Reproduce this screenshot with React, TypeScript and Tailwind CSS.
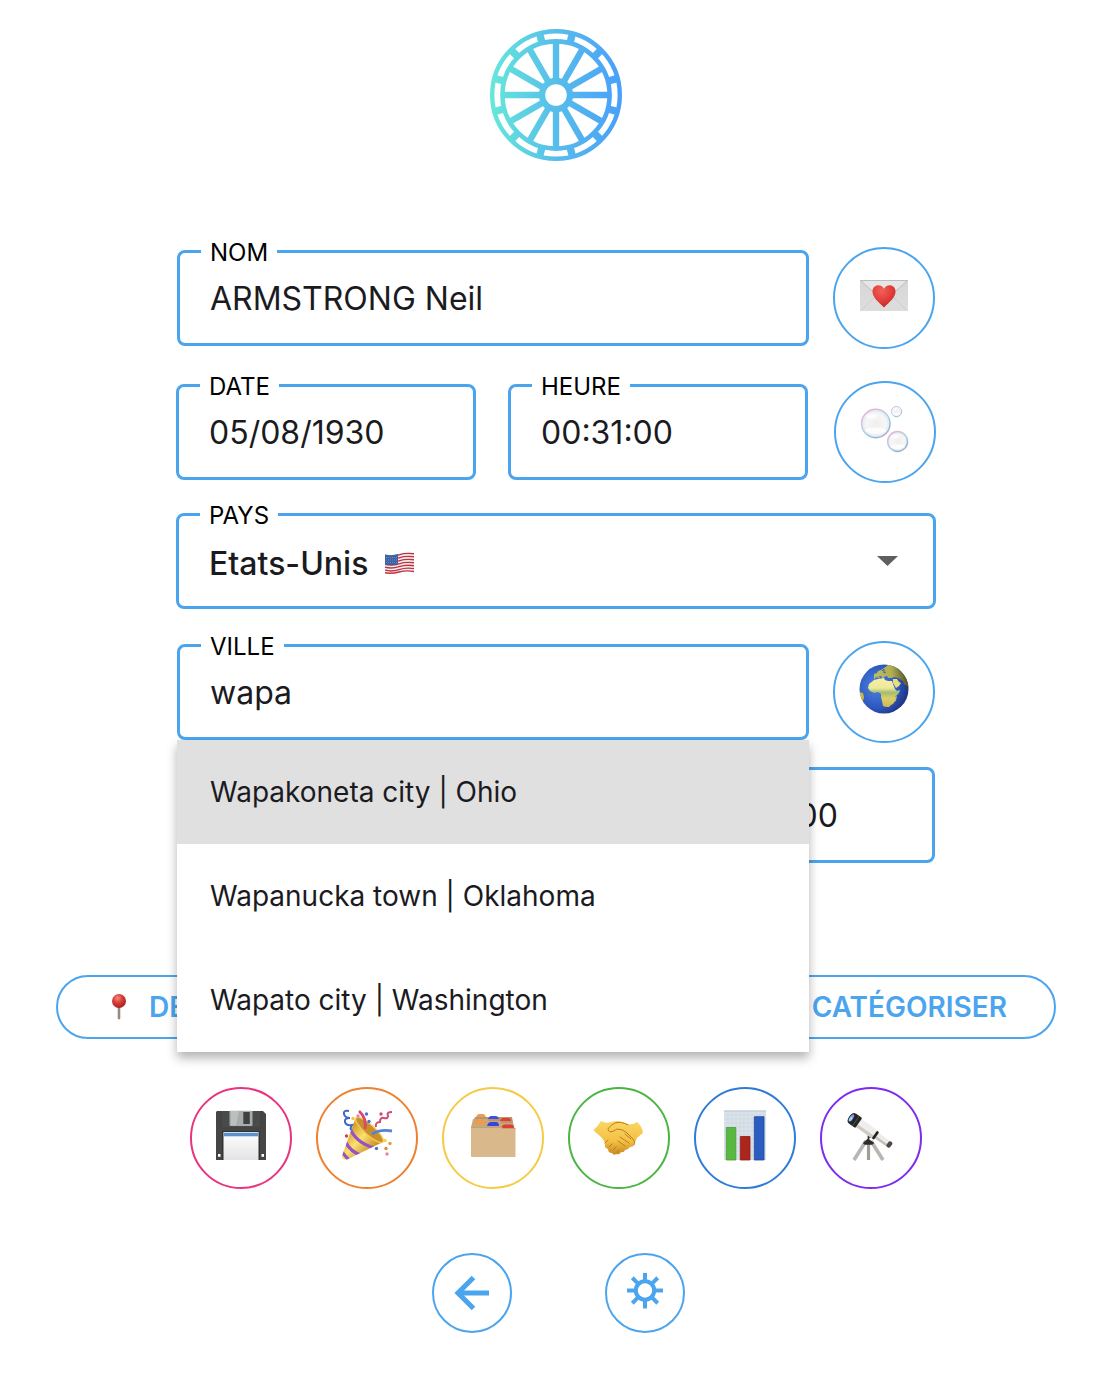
import type { ComponentProps, ReactNode } from "react";
import clsx from "clsx";

const steps = Array.from({ length: 12 }, (_, i) => i * 30);

function Wheel() {
  return (
    <svg className="size-[132px]" viewBox="-66 -66 132 132" role="img" aria-label="Logo">
      <defs>
        <linearGradient id="wheel-fill" x1="0" y1="0" x2="1" y2="0">
          <stop offset="0" stopColor="#66e8da" />
          <stop offset="0.5" stopColor="#57bdea" />
          <stop offset="1" stopColor="#499ffb" />
        </linearGradient>
        <mask id="wheel-mask" maskUnits="userSpaceOnUse" x="-66" y="-66" width="132" height="132">
          <g fill="none" stroke="#fff">
            <circle r="63.8" strokeWidth="4.4" />
            <circle r="53.6" strokeWidth="4.6" />
            <circle r="14" strokeWidth="6.400" />
            {steps.map((a) => (
              <g key={a} transform={`rotate(${a})`}>
                <path d="M0-15V-53" strokeWidth="6.400" />
                <path d="M0-54V-63" strokeWidth="7.400" transform="rotate(15)" />
              </g>
            ))}
          </g>
        </mask>
      </defs>
      <rect x="-66" y="-66" width="132" height="132" fill="url(#wheel-fill)" mask="url(#wheel-mask)" />
    </svg>
  );
}

function Glyph({ children }: { children: ReactNode }) {
  return (
    <svg className="size-[50px] overflow-visible" viewBox="0 0 50 50" aria-hidden="true">
      {children}
    </svg>
  );
}

function LoveLetter() {
  return (
    <Glyph>
      <defs>
        <linearGradient id="paper" x1="0" y1="0" x2="0" y2="1">
          <stop offset="0" stopColor="#d6d6d6" />
          <stop offset="1" stopColor="#dedede" />
        </linearGradient>
        <radialGradient id="heart" cx="0.4" cy="0.25" r="0.8">
          <stop offset="0" stopColor="#f4605a" />
          <stop offset="0.6" stopColor="#df3b37" />
          <stop offset="1" stopColor="#b92823" />
        </radialGradient>
      </defs>
      <rect x="1" y="10" width="48" height="31" rx="0.5" fill="url(#paper)" />
      <path d="M2 40.500 19 24h12l17 16.500" fill="#dcdcdc" stroke="#cacaca" strokeWidth="0.8" />
      <path d="M1.500 10.500 21 28q4 3.500 8 0l19.500-17.500z" fill="#e6e6e6" stroke="#b3b6b8" strokeWidth="0.8" />
      <path
        d="M25 37.500C20 32.500 13.500 27.500 13.500 21.500c0-7 8.500-8.500 11.500-2.800 3-5.700 11.500-4.200 11.500 2.800C36.500 27.500 30 32.500 25 37.500z"
        fill="url(#heart)"
      />
    </Glyph>
  );
}

function Bubbles() {
  const bubbles = [
    { x: 15.8, y: 19.5, r: 14.3 },
    { x: 36.5, y: 7.5, r: 5.2 },
    { x: 37.6, y: 37.5, r: 10 },
  ];
  return (
    <Glyph>
      <defs>
        <linearGradient id="film" x1="0.1" y1="0" x2="0.8" y2="1">
          <stop offset="0" stopColor="#f2a9d2" />
          <stop offset="0.3" stopColor="#d3c3dd" />
          <stop offset="0.6" stopColor="#a9cfe4" />
          <stop offset="0.85" stopColor="#8fb4cf" />
          <stop offset="1" stopColor="#d3a9c6" />
        </linearGradient>
        <radialGradient id="bubble">
          <stop offset="0" stopColor="#f1efed" />
          <stop offset="0.7" stopColor="#f7f6f5" />
          <stop offset="1" stopColor="#d6e8f4" />
        </radialGradient>
      </defs>
      {bubbles.map((b) => (
        <g key={b.r}>
          <circle cx={b.x} cy={b.y} r={b.r} fill="url(#bubble)" stroke="url(#film)" strokeWidth={b.r > 6 ? 1.4 : 0.9} />
          <ellipse cx={b.x} cy={b.y + b.r * 0.5} rx={b.r * 0.75} ry={b.r * 0.22} fill="#fff" opacity="0.7" />
          <ellipse cx={b.x - b.r * 0.3} cy={b.y - b.r * 0.5} rx={b.r * 0.4} ry={b.r * 0.2} fill="#fff" opacity="0.7" />
        </g>
      ))}
    </Glyph>
  );
}

function Globe() {
  return (
    <Glyph>
      <defs>
        <radialGradient id="sea" cx="0.35" cy="0.45" r="0.65">
          <stop offset="0" stopColor="#4b83e0" />
          <stop offset="0.65" stopColor="#2e58bf" />
          <stop offset="1" stopColor="#1d327c" />
        </radialGradient>
        <linearGradient id="eurasia" x1="0" y1="0.5" x2="1" y2="0.4">
          <stop offset="0" stopColor="#b9bf62" />
          <stop offset="0.5" stopColor="#b3ae52" />
          <stop offset="1" stopColor="#3d3f1c" />
        </linearGradient>
        <linearGradient id="africa" x1="0" y1="0" x2="0" y2="1">
          <stop offset="0" stopColor="#f5efa6" />
          <stop offset="0.35" stopColor="#eee89a" />
          <stop offset="0.5" stopColor="#a3bd72" />
          <stop offset="0.7" stopColor="#dccf69" />
          <stop offset="1" stopColor="#cdb850" />
        </linearGradient>
        <clipPath id="globe-clip">
          <circle cx="25" cy="25" r="24.500" />
        </clipPath>
      </defs>
      <g clipPath="url(#globe-clip)">
        <rect width="50" height="50" fill="url(#sea)" />
        <path
          d="M15 13l0-3 3-1 1-2 3-1 3-2 4-3 8 0 8 6 6 10 0 8-3-3-3-2-1-3-5-3-4-1-2 1-4 0-1-2-3 1-1 2-2-3-2 0 1 3-3-2-2 1-1 2z"
          fill="url(#eurasia)"
        />
        <path
          d="M15 16l4-1 6-1 1 2 3 1 4 0 1 3 2 5 2 2 3-1-1 3-4 4 0 4-2 3-2 1-2 2-3 0-3-1-1-5-1-4 0-3-3-2-4 1-4-2-2-3 1-4z"
          fill="url(#africa)"
        />
        <path d="M34 15l4 0 2 3 2 1-2 3-3 2-3-5z" fill="#e7dc80" />
        <path d="M36 33l2-1-1 4-1 2-1-1z" fill="#d3c35c" />
        <path d="M0 28l4 1 1 4-1 4-3 3-4-6z" fill="#cdb83f" />
        <path d="M23 7l2-2 0 4 2-1" fill="none" stroke="#3663bd" />
      </g>
    </Glyph>
  );
}

function Floppy() {
  return (
    <Glyph>
      <defs>
        <linearGradient id="floppy-label" x1="0" y1="0" x2="0" y2="1">
          <stop offset="0" stopColor="#fff" />
          <stop offset="1" stopColor="#e3e3e6" />
        </linearGradient>
      </defs>
      <path d="M1 1H47l3 3v46H0V2z" fill="#454545" />
      <path d="M5 1v15q0 2 2 2h36q2 0 2-2V1" fill="#4a4a4a" stroke="#404040" strokeWidth="0.8" />
      <rect x="13.500" y="0.700" width="23" height="15.300" rx="0.800" fill="#a9acad" />
      <path d="M15 1h8l-3 14.500h-5z" fill="#bcbfbf" />
      <rect x="27.300" y="2" width="6.500" height="12" rx="0.500" fill="#3f4041" />
      <path d="M6 50V22.500q0-1.500 1.500-1.500h35q1.500 0 1.500 1.500V50z" fill="#323232" />
      <rect x="7.500" y="22" width="35" height="28" fill="url(#floppy-label)" />
      <rect x="8" y="22.700" width="34" height="3.600" fill="#5d90c8" />
      <rect x="2" y="44" width="2.500" height="2.800" fill="#fff" />
      <rect x="45.500" y="44" width="2.500" height="2.800" fill="#fff" />
    </Glyph>
  );
}

function PartyPopper() {
  return (
    <Glyph>
      <defs>
        <linearGradient id="cone" gradientUnits="userSpaceOnUse" x1="5" y1="24" x2="26" y2="44">
          <stop offset="0" stopColor="#d9a532" />
          <stop offset="0.45" stopColor="#fbe070" />
          <stop offset="1" stopColor="#c98f28" />
        </linearGradient>
        <clipPath id="cone-clip">
          <path d="M13.500 8 0 46q0 4 5 3.500L41 32q-3-16-27.500-24z" />
        </clipPath>
      </defs>
      <g clipPath="url(#cone-clip)">
        <rect width="50" height="50" fill="url(#cone)" />
        <path d="M8 18q5 14 24 20M3 31q5 11 18 15M0 42q3 4 7 8" fill="none" stroke="#9850c8" strokeWidth="3.200" />
      </g>
      <ellipse cx="27.500" cy="20" rx="18" ry="5" transform="rotate(42 27.500 20)" fill="#c98f2b" stroke="#f3cb4f" strokeWidth="1.400" />
      <path d="M23 19Q25 8 17 1" fill="none" stroke="#d9486f" strokeWidth="2.800" />
      <path d="M30 24Q38 19 50 21" fill="none" stroke="#5381dc" strokeWidth="2.800" />
      <path d="M7 1Q1 0 2 4t6 4q-6 0-5 4t7 3q-2 3-1 5" fill="none" stroke="#3f66cb" strokeWidth="2" />
      <path d="M34 17q-1-5 4-5 0-5 4-4 4 1 4-2-2-4 4-4" fill="none" stroke="#cf4d72" strokeWidth="2" />
      {[
        [24.5, 4, "#4473d4"], [27, 11.5, "#4473d4"], [11, 8.5, "#edc64b"], [16, 6, "#e583b3"],
        [39, 4, "#d74b69"], [4.5, 26, "#d93b51"], [43, 30.5, "#efd447"], [48, 33.5, "#e29a46"],
        [34.5, 38.5, "#4473d4"], [44, 38.5, "#d98a3e"], [45, 44, "#e583b3"],
      ].map(([x, y, c]) => (
        <circle key={`${x}-${y}`} cx={x} cy={y} r="1.700" fill={String(c)} />
      ))}
    </Glyph>
  );
}

function CardIndex() {
  return (
    <Glyph>
      <path d="M7 7h37l2 11H3z" fill="#b8956b" />
      <path d="M8 7q1-3 3-3h4q2 0 3 3z" fill="#ec9c4c" />
      <path d="M20 9q1-3 3-3h5q2 0 3 3z" fill="#3b4de3" />
      <path d="M32 11q1-3 3-3h5q3 0 3 3z" fill="#e23e38" />
      <path d="M5 9h14l2 2h11l2 2h11l1.500 5H3z" fill="#cba678" />
      <path d="M6 14q1-4 4-4h5q2 0 3 4z" fill="#ec9c4c" />
      <path d="M19 16q1-4 4-4h5q3 0 3 4z" fill="#3445e2" />
      <path d="M33 18.500q1-4 4-4h6q3 0 3 4z" fill="#df3c36" />
      <path d="M3 17h30l2 1h12.500v28q0 1-1 1H4q-1 0-1-1z" fill="#d9b88c" />
      <path d="M3 17.500h30l2 1h12.500" fill="none" stroke="#bd9a6e" strokeWidth="0.800" />
    </Glyph>
  );
}

function Handshake() {
  return (
    <Glyph>
      <defs>
        <linearGradient id="skin" x1="0" y1="0" x2="0" y2="1">
          <stop offset="0" stopColor="#fbd664" />
          <stop offset="0.6" stopColor="#f3c044" />
          <stop offset="1" stopColor="#c8871e" />
        </linearGradient>
      </defs>
      <path
        d="M-0.500 20Q4 16 7 11q5 3 10 1 9-3 17 2 5 1 9-2 5 4 6 11-3 2-6 5-1 3-3 6 0 3-4 3-2 3-5 3-1 3-4 2-1 3-5 2-2 2-4-1-4 0-4-4-4-1-3-5-1-5-5-8-4-3-6.500-6z"
        fill="url(#skin)"
      />
      <path
        d="M34 15q-7-4-13-2-7 4-7 7 2 4 9-1 6 0 10 4l6 6q3 3 1 6M31 24l6 5M26 27l9 6M24 31l7 5M11 33l3-3M15 37l3-3M19 40l3-3M23 42l2-2"
        fill="none" stroke="#bb7f20" strokeLinecap="round"
      />
    </Glyph>
  );
}

function BarChart() {
  return (
    <Glyph>
      <rect x="4" y="0.500" width="42" height="49.500" fill="#dbe3ea" />
      <path
        d="M8 1v49M12 1v49M16 1v49M20 1v49M24 1v49M28 1v49M32 1v49M36 1v49M40 1v49M44 1v49M4 5h42M4 9h42M4 13h42M4 17h42M4 21h42M4 25h42M4 29h42M4 33h42M4 37h42M4 41h42M4 45h42"
        stroke="#c9d5df" strokeWidth="0.600"
      />
      <path d="M4 1h42" stroke="#bcc5cc" />
      <path d="M6.300 17.500h9.500V50H6.300z" fill="#58b840" stroke="#479a34" strokeWidth="0.800" />
      <path d="M20.300 26.500H30V50h-9.700z" fill="#ab261c" stroke="#8d1c14" strokeWidth="0.800" />
      <path d="M34.300 6.700H44V50h-9.700z" fill="#2a5dc0" stroke="#1f489b" strokeWidth="0.800" />
    </Glyph>
  );
}

function Telescope() {
  return (
    <Glyph>
      <path d="M20 31 8 50M25 31l12 19" stroke="#b9b6b2" strokeWidth="3.600" />
      <path d="M22.500 31v19" stroke="#a19e9a" strokeWidth="3.200" />
      <path d="M18 33l4-3.500 5 3.500-1 1h-7zM22.500 24v7" fill="#2d2d2d" stroke="#2d2d2d" strokeWidth="1.600" />
      <path d="M22 26q7 1 7-5" fill="none" stroke="#333" strokeWidth="3" />
      <g transform="translate(3.500 1.500) rotate(35 2 7) scale(0.88 0.82)">
        <rect x="11" y="2" width="24" height="12" fill="#f0eeec" />
        <rect x="11" y="10" width="24" height="4" fill="#cecac6" />
        <rect x="35" y="4" width="18" height="8" rx="1" fill="#eeebe8" />
        <rect x="35" y="9" width="18" height="3" fill="#c4c0bc" />
        <rect x="34" y="3" width="3" height="11" rx="1" fill="#222" />
        <rect x="52" y="4" width="5" height="8" rx="2" fill="#4a4a4a" />
        <rect x="2" y="0.500" width="10" height="15" rx="1.500" fill="#262626" />
        <path d="M8 1v14" stroke="#555" />
        <ellipse cx="2" cy="8" rx="3.200" ry="7" fill="#20232e" />
        <ellipse cx="1.800" cy="8" rx="2" ry="5" fill="#8a93e8" />
        <ellipse cx="1.800" cy="9.500" rx="1.500" ry="3" fill="#8be0df" />
      </g>
    </Glyph>
  );
}

function Pin() {
  return (
    <svg className="h-7 w-5 shrink-0" viewBox="0 0 20 28" aria-hidden="true">
      <defs>
        <radialGradient id="pin-head" cx="0.4" cy="0.3" r="0.7">
          <stop offset="0" stopColor="#f28a80" />
          <stop offset="0.5" stopColor="#d83b36" />
          <stop offset="1" stopColor="#a9231f" />
        </radialGradient>
      </defs>
      <path d="M8.700 13h2.600v12.500q-1.300 2-2.600 0z" fill="#968b84" />
      <circle cx="10" cy="8" r="7" fill="url(#pin-head)" />
    </svg>
  );
}

function Flag() {
  return (
    <svg className="h-[22px] w-[29px]" viewBox="0 0 29 22" aria-hidden="true">
      <path d="M0 2.500Q7 4 14 1.800T29 1V20Q22 18.500 15 20.300T0 21.500z" fill="#f3efef" />
      <path
        d="M0 3.500Q7 5 14 2.800T29 1.800M0 6.500Q7 8 14 5.800T29 4.800M0 9.400Q7 11 14 8.800T29 7.800M0 12.300Q7 14 14 11.800T29 10.800M0 15.200Q7 17 14 14.700T29 13.700M0 18.100Q7 20 14 17.600T29 16.600M0 20.800Q7 22 14 20T29 19.500"
        fill="none" stroke="#bf3340" strokeWidth="1.400"
      />
      <path d="M0 2.500Q7 4 13 2v10.500Q7 14 0 12.800z" fill="#3f62a5" />
      <path d="M1 5.500h11M1 8h11M1 10.500h11" stroke="#7f98c9" strokeWidth="0.700" strokeDasharray="1 1" />
    </svg>
  );
}

interface FieldProps {
  id: string;
  label: string;
  className?: string;
  children: ReactNode;
}

function Field({ id, label, className, children }: FieldProps) {
  return (
    <fieldset className={clsx("h-24 min-w-0 rounded-lg border-[3px] border-[#4ba5ee]", className)}>
      <legend className="ml-[21px] h-[3px] px-[9px] text-2xl leading-[5px] text-black">
        <label htmlFor={id}>{label}</label>
      </legend>
      {children}
    </fieldset>
  );
}

function TextField({ id, label, value, className }: { id: string; label: string; value: string; className?: string }) {
  return (
    <Field id={id} label={label} className={className}>
      <input
        id={id}
        defaultValue={value}
        className="h-[90px] w-full bg-transparent px-[30px] text-[32px] text-[#1b1b1f] outline-none"
      />
    </Field>
  );
}

function RoundButton({ className, ...props }: ComponentProps<"button">) {
  return (
    <button
      type="button"
      className={clsx(
        "flex size-[102px] shrink-0 items-center justify-center rounded-full border-2 pb-1.5",
        className ?? "border-[#4ba5ee]",
      )}
      {...props}
    />
  );
}

const cities = ["Wapakoneta city | Ohio", "Wapanucka town | Oklahoma", "Wapato city | Washington"];

const actions = [
  { name: "Enregistrer", ring: "border-[#ea337f]", icon: <Floppy /> },
  { name: "Fêter", ring: "border-[#ee8130]", icon: <PartyPopper /> },
  { name: "Fiches", ring: "border-[#f5cb46]", icon: <CardIndex /> },
  { name: "Relations", ring: "border-[#4bb543]", icon: <Handshake /> },
  { name: "Statistiques", ring: "border-[#2f7cd8]", icon: <BarChart /> },
  { name: "Observer", ring: "border-[#7d2bf0]", icon: <Telescope /> },
];

const pill =
  "flex h-16 items-center gap-5 rounded-full border-2 border-[#4ba5ee] pr-[47px] pl-[51px] text-[28px] font-semibold text-[#4ba5ee]";
const navButton =
  "flex size-20 items-center justify-center rounded-full border-2 border-[#4ba5ee] text-[#4ba5ee]";

export default function App() {
  return (
    <main className="flex flex-col items-center bg-white pt-[29px] pb-14 pl-[18px] font-['Inter',sans-serif] text-[#1b1b1f]">
      <Wheel />

      <form className="mt-[86px] w-full max-w-[760px]">
        <div className="flex items-center gap-6 px-px">
          <TextField id="nom" label="NOM" value="ARMSTRONG Neil" className="flex-1" />
          <RoundButton aria-label="Envoyer">
            <LoveLetter />
          </RoundButton>
        </div>

        <div className="mt-8 flex items-center gap-[26px]">
          <div className="grid flex-1 grid-cols-2 gap-8">
            <TextField id="date" label="DATE" value="05/08/1930" />
            <TextField id="heure" label="HEURE" value="00:31:00" />
          </div>
          <RoundButton aria-label="Effacer">
            <Bubbles />
          </RoundButton>
        </div>

        <Field id="pays" label="PAYS" className="mt-[30px]">
          <div className="relative">
            <select
              id="pays"
              className="h-[90px] w-full appearance-none bg-transparent px-[30px] pt-1.5 text-[32px] font-medium outline-none"
            >
              <option>Etats-Unis</option>
            </select>
            <span className="pointer-events-none absolute inset-y-0 left-[206px] flex items-center pt-1">
              <Flag />
            </span>
            <span className="pointer-events-none absolute inset-y-0 right-[35px] flex items-center">
              <svg className="h-2.5 w-[21px]" viewBox="0 0 21 10" aria-hidden="true">
                <path d="M0 0h21L10.500 10z" fill="#5f5f61" />
              </svg>
            </span>
          </div>
        </Field>

        <div className="mt-8 flex items-center gap-6 px-px">
          <div className="relative flex-1">
            <TextField id="ville" label="VILLE" value="wapa" />
            <ul className="absolute inset-x-0 top-full z-10 bg-white shadow-[0_6px_10px_rgba(0,0,0,0.3)]">
              {cities.map((city, i) => (
                <li key={city}>
                  <button
                    type="button"
                    className={clsx("h-[104px] w-full px-[33px] text-left text-[28px]", i === 0 && "bg-[#e0e0e0]")}
                  >
                    {city}
                  </button>
                </li>
              ))}
            </ul>
          </div>
          <RoundButton aria-label="Localiser">
            <Globe />
          </RoundButton>
        </div>

        <div className="mt-6 flex justify-end px-px">
          <TextField id="utc" label="UTC" value="-05:00" className="w-[234px]" />
        </div>
      </form>

      <div className="mt-28 flex w-full max-w-[1000px] justify-between">
        <button type="button" className={pill}>
          <Pin />
          DERNIER
        </button>
        <button type="button" className={pill}>
          CATÉGORISER
        </button>
      </div>

      <div className="mt-12 flex gap-6">
        {actions.map((action) => (
          <RoundButton key={action.name} aria-label={action.name} className={action.ring}>
            {action.icon}
          </RoundButton>
        ))}
      </div>

      <nav className="mt-16 flex gap-[93px] pl-1">
        <button type="button" aria-label="Retour" className={navButton}>
          <svg className="size-9" viewBox="0 0 36 36" fill="none" stroke="currentColor" strokeWidth="5" aria-hidden="true">
            <path d="M35 18H5M19.500 2.500 4 18l15.500 15.500" />
          </svg>
        </button>
        <button type="button" aria-label="Réglages" className={navButton}>
          <svg className="size-10" viewBox="-20 -17.500 40 40" fill="none" stroke="currentColor" strokeWidth="4" aria-hidden="true">
            <circle r="9.200" />
            {[0, 45, 90, 135, 180, 225, 270, 315].map((a) => (
              <path key={a} d="M0-10.500V-18" transform={`rotate(${a})`} />
            ))}
          </svg>
        </button>
      </nav>
    </main>
  );
}
